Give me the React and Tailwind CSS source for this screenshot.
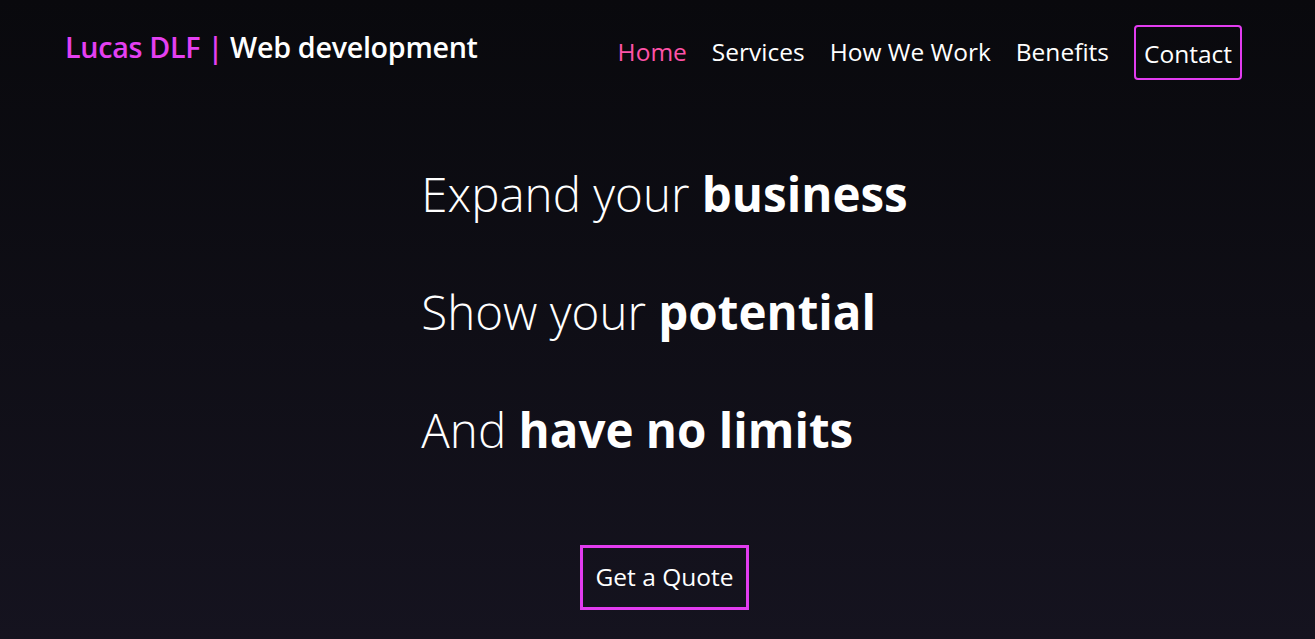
import React from "react";

const links = ["Home", "Services", "How We Work", "Benefits"];

const App = () => {
  return (
    <div
      className="min-h-[639px] bg-gradient-to-b from-[#09090d] to-[#15131f] text-white"
      style={{ fontFamily: '"Open Sans", "Noto Sans", sans-serif' }}
    >
      <header className="flex items-start justify-between pl-[65px] pr-[73px] pt-[27px]">
        <div className="text-[28.7px] font-semibold leading-[40px] tracking-[-0.3px]">
          <span className="text-[#e440f2]">Lucas DLF | </span>
          <span>Web development</span>
        </div>
        <nav className="-mt-[2px] flex items-center gap-[25px] text-[24.5px]">
          {links.map((link, i) => (
            <a
              key={link}
              href="#"
              className={i === 0 ? "text-[#ff52a8]" : "text-white"}
            >
              {link}
            </a>
          ))}
          <a
            href="#"
            className="flex h-[55px] items-center rounded-[4px] border-2 border-[#e23cf0] px-[8px] pt-[4px]"
          >
            Contact
          </a>
        </nav>
      </header>

      <main className="flex flex-col items-center pt-[76px]">
        <div className="flex flex-col gap-[42px] pl-[14px] text-[47.5px] font-light leading-[76px]">
          <h1>
            Expand your <b className="font-bold">business</b>
          </h1>
          <h1>
            Show your <b className="font-bold">potential</b>
          </h1>
          <h1>
            And <b className="font-bold">have no limits</b>
          </h1>
        </div>
        <button className="ml-[14px] mt-[77px] h-[65px] border-[3px] border-[#e23cf0] px-[13px] text-[24.5px]">
          Get a Quote
        </button>
      </main>
    </div>
  );
};

export default App;
